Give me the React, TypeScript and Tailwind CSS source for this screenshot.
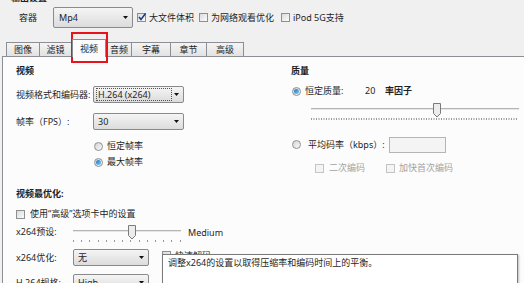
import React from "react";

function Check({ checked = false, disabled = false }: { checked?: boolean; disabled?: boolean }) {
  return (
    <span
      className={`relative inline-block w-[9px] h-[9px] shrink-0 border ${
        disabled ? "border-[#c4c4c4] bg-[#f4f4f4]" : "border-[#8e8f8f] bg-gradient-to-br from-[#dcdcdc] to-[#fbfbfb]"
      }`}
    >
      {checked && (
        <svg className="absolute left-[-1px] top-[-2px]" width="10" height="10" viewBox="0 0 10 10">
          <path d="M2 5 L4 7.5 L8.5 1.5" fill="none" stroke="#1d3f8a" strokeWidth="1.6" />
        </svg>
      )}
    </span>
  );
}

function Radio({ on = false }: { on?: boolean }) {
  return (
    <span className="flex items-center justify-center w-[9px] h-[9px] shrink-0 rounded-full border border-[#8e8f8f] bg-gradient-to-br from-[#d4d4d4] to-[#fafafa]">
      {on && <span className="w-[5px] h-[5px] rounded-full bg-gradient-to-br from-[#1d6fc4] to-[#7fd0f5]" />}
    </span>
  );
}

function Select({ value, className, focus = false }: { value: string; className: string; focus?: boolean }) {
  return (
    <div
      className={`flex items-center justify-between rounded-[2px] border border-[#8a8a8a] bg-gradient-to-b from-[#f5f5f5] to-[#dcdcdc] pl-[2px] pr-[4px] ${className}`}
    >
      <span
        className={`flex items-center h-[13px] pl-[1px] leading-none ${
          focus ? "border border-dotted border-[#555] w-[76px]" : "border border-transparent"
        }`}
      >
        {value}
      </span>
      <svg width="5" height="3" viewBox="0 0 5 3">
        <path d="M0 0 L5 0 L2.5 3 Z" fill="#111" />
      </svg>
    </div>
  );
}

function Slider({ width, thumb, ticks }: { width: number; thumb: number; ticks: number[] }) {
  return (
    <svg width={width} height={20} className="shrink-0">
      <rect x={0} y={6} width={width} height={1} fill="#b4b4b4" />
      <rect x={0} y={7} width={width} height={1} fill="#e6e6e6" />
      {ticks.map((t) => (
        <rect key={t} x={t} y={16} width={1} height={2} fill="#9a9a9a" />
      ))}
      <path
        d={`M${thumb - 3.5} 1.5 h7 v10 l-3.5 3.5 l-3.5 -3.5 Z`}
        fill="#ececec"
        stroke="#7a7a7a"
        strokeWidth="1"
      />
    </svg>
  );
}

const tabs: [string, string][] = [
  ["图像", "w-[34px]"],
  ["滤镜", "w-[33px]"],
  ["视频", "w-[34px]"],
  ["音频", "w-[26px]"],
  ["字幕", "w-[40px]"],
  ["章节", "w-[37px]"],
  ["高级", "w-[38px]"],
];

export default function App() {
  const fineTicks = Array.from({ length: 83 }, (_, i) => i * 2.5);
  const coarseTicks = Array.from({ length: 14 }, (_, i) => Math.round(i * 8.2));
  return (
    <div className="relative w-[524px] h-[283px] overflow-hidden bg-[#f0f0f0] text-[9px] text-[#1e1e1e] font-['Noto_Sans','Noto_Sans_CJK_SC',sans-serif]">
      <div className="h-[4px] overflow-hidden pl-[11px]">
        <div className="-mt-[8px] leading-[12px] font-bold">输出设置</div>
      </div>

      {/* container row */}
      <div className="flex items-center h-[21px] mt-[3px]">
        <span className="w-[53px] pl-[19px]">容器</span>
        <Select value="Mp4" className="w-[80px] h-[21px] pl-[3px]" />
        <span className="ml-[4px] flex items-center gap-[3px]">
          <Check checked />
          <span>大文件体积</span>
        </span>
        <span className="ml-[5px] flex items-center gap-[3px]">
          <Check />
          <span>为网络观看优化</span>
        </span>
        <span className="ml-[7px] flex items-center gap-[3px]">
          <Check />
          <span>iPod 5G支持</span>
        </span>
      </div>

      {/* tabs */}
      <div className="flex items-end h-[17px] mt-[11px] pl-[6px]">
        {tabs.map(([t, w], i) =>
          i === 2 ? (
            <div
              key={t}
              className={`${w} relative z-10 h-[18px] -mb-px flex items-center justify-center border border-b-0 border-[#8c8e94] bg-[#fcfcfc]`}
            >
              {t}
            </div>
          ) : (
            <div
              key={t}
              className={`${w} h-[14px] flex items-center justify-center border border-b-0 border-[#8c8e94] bg-gradient-to-b from-[#f4f4f4] to-[#e2e2e2] ${
                i > 0 && i !== 3 ? "-ml-px" : ""
              }`}
            >
              {t}
            </div>
          )
        )}
      </div>

      {/* panel */}
      <div className="ml-[2px] h-[230px] border-l border-t border-[#8c8e94] bg-[#fcfcfc] flex">
        {/* left column */}
        <div className="w-[288px] pl-[13px] flex flex-col">
          <div className="mt-[8px] h-[12px] leading-[12px] font-bold">视频</div>
          <div className="mt-[9px] flex items-center">
            <span className="w-[77px]">视频格式和编码器:</span>
            <Select value="H.264 (x264)" className="w-[91px] h-[17px]" focus />
          </div>
          <div className="mt-[10px] flex items-center">
            <span className="w-[77px]">帧率（FPS）:</span>
            <Select value="30" className="w-[91px] h-[17px]" />
          </div>
          <div className="mt-[10px] ml-[78px] h-[12px] flex items-center gap-[4px]">
            <Radio />
            <span>恒定帧率</span>
          </div>
          <div className="mt-[4px] ml-[78px] h-[12px] flex items-center gap-[4px]">
            <Radio on />
            <span>最大帧率</span>
          </div>
          <div className="mt-[20px] h-[12px] leading-[12px] font-bold">视频最优化:</div>
          <div className="mt-[8px] h-[12px] flex items-center gap-[5px]">
            <Check />
            <span>使用“高级”选项卡中的设置</span>
          </div>
          <div className="mt-[3px] h-[18px] flex items-center">
            <span className="w-[57px]">x264预设:</span>
            <div className="pt-[4px]">
              <Slider width={108} thumb={59} ticks={coarseTicks} />
            </div>
            <span className="ml-[7px] pt-[1px]">Medium</span>
          </div>
          <div className="mt-[8px] flex items-center">
            <span className="w-[57px]">x264优化:</span>
            <Select value="无" className="w-[76px] h-[17px]" />
            <span className="ml-[13px] -mt-[4px] flex items-center gap-[4px]">
              <Check />
              <span>快速解码</span>
            </span>
          </div>
          <div className="mt-[8px] flex items-center">
            <span className="w-[57px]">H.264规格:</span>
            <Select value="High" className="w-[76px] h-[17px]" />
          </div>
        </div>

        {/* right column */}
        <div className="flex-1 flex flex-col">
          <div className="mt-[8px] h-[12px] leading-[12px] font-bold">质量</div>
          <div className="mt-[8px] h-[12px] flex items-center">
            <span className="w-[74px] flex items-center gap-[4px] pl-[1px]">
              <Radio on />
              <span>恒定质量:</span>
            </span>
            <span className="w-[20px]">20</span>
            <span className="font-bold">率因子</span>
          </div>
          <div className="mt-[5px] ml-[20px]">
            <Slider width={208} thumb={126} ticks={fineTicks} />
          </div>
          <div className="mt-[14px] h-[17px] flex items-center">
            <span className="w-[98px] flex items-center gap-[7px] pl-[1px]">
              <Radio />
              <span>平均码率（kbps）:</span>
            </span>
            <span className="w-[57px] h-[16px] border border-[#b5b5b5] bg-[#f4f4f4]" />
          </div>
          <div className="mt-[9px] ml-[24px] h-[12px] flex items-center text-[#a3a3a3]">
            <span className="w-[71px] flex items-center gap-[5px]">
              <Check disabled />
              <span>二次编码</span>
            </span>
            <span className="flex items-center gap-[4px]">
              <Check disabled />
              <span>加快首次编码</span>
            </span>
          </div>
        </div>
      </div>

      {/* tooltip */}
      <div className="absolute left-[162px] top-[254px] w-[356px] h-[40px] border border-[#7a7a7a] bg-white pl-[5px] pt-[1px] shadow-[1px_1px_2px_rgba(0,0,0,0.25)]">
        调整x264的设置以取得压缩率和编码时间上的平衡。
      </div>

      {/* annotation */}
      <div className="absolute left-[71px] top-[32px] w-[37px] h-[31px] border-2 border-[#e8141b]" />
    </div>
  );
}
